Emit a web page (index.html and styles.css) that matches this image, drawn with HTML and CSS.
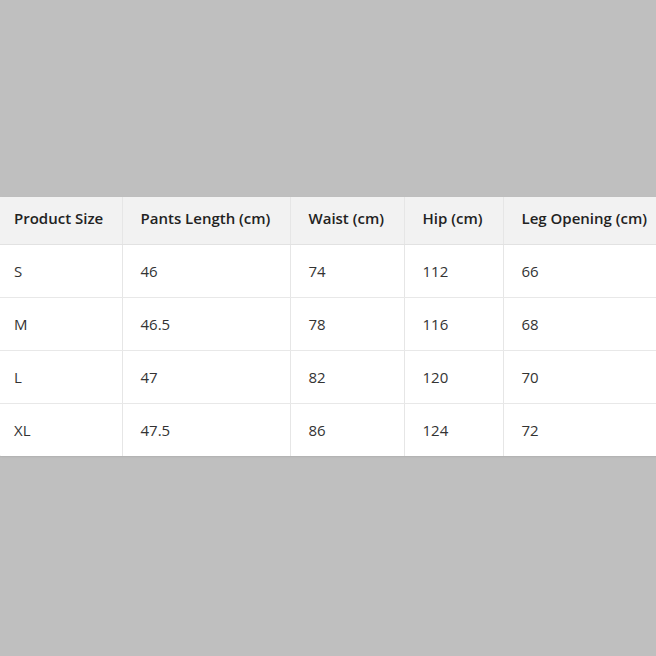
FILE: index.html
```html
<!DOCTYPE html>
<html>
<head>
<meta charset="utf-8">
<link rel="stylesheet" href="styles.css">
</head>
<body>
<div class="page">
  <div class="card">
    <table class="size-table">
      <colgroup>
        <col class="c1"><col class="c2"><col class="c3"><col class="c4"><col class="c5">
      </colgroup>
      <thead>
        <tr><th>Product Size</th><th>Pants Length (cm)</th><th>Waist (cm)</th><th>Hip (cm)</th><th>Leg Opening (cm)</th></tr>
      </thead>
      <tbody>
        <tr><td>S</td><td>46</td><td>74</td><td>112</td><td>66</td></tr>
        <tr><td>M</td><td>46.5</td><td>78</td><td>116</td><td>68</td></tr>
        <tr><td>L</td><td>47</td><td>82</td><td>120</td><td>70</td></tr>
        <tr><td>XL</td><td>47.5</td><td>86</td><td>124</td><td>72</td></tr>
      </tbody>
    </table>
  </div>
</div>
</body>
</html>
```
FILE: styles.css
```css
html, body {
  margin: 0;
  padding: 0;
  background: #bfbfbf;
}
.page {
  width: 656px;
  height: 656px;
  display: flex;
  align-items: center;
  overflow: hidden;
}
.card {
  margin-left: -4px;
  margin-bottom: 3px;
  background: #fff;
  border-radius: 6px;
  box-shadow: 0 1px 2px rgba(0,0,0,0.08);
  overflow: hidden;
  flex-shrink: 0;
}
.size-table {
  border-collapse: collapse;
  table-layout: fixed;
  width: 680px;
  font-family: "Open Sans", "Noto Sans", sans-serif;
  font-size: 15px;
  color: #333;
}
.c1 { width: 126px; }
.c2 { width: 168px; }
.c3 { width: 114px; }
.c4 { width: 99px; }
.c5 { width: 173px; }
.size-table th,
.size-table td {
  text-align: left;
  padding: 0 0 0 18px;
  white-space: nowrap;
  border-left: 1px solid #e6e6e6;
}
.size-table th:first-child,
.size-table td:first-child {
  border-left: none;
}
.size-table th {
  height: 42px;
  padding-bottom: 5px;
  background: #f2f2f2;
  font-weight: 600;
  color: #222;
  border-bottom: 1px solid #e2e2e2;
}
.size-table td {
  height: 52px;
  border-bottom: 1px solid #e8e8e8;
}
.size-table tbody tr:last-child td {
  border-bottom: none;
}
```
